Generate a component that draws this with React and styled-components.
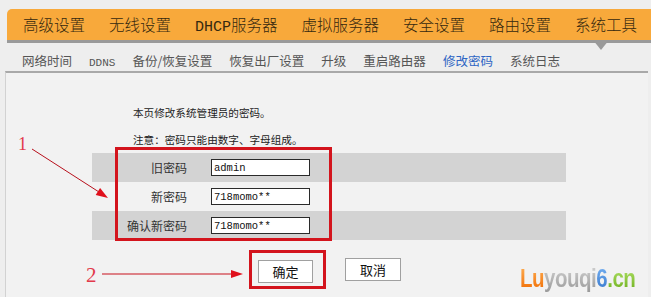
import React from 'react';
import styled, { createGlobalStyle } from 'styled-components';

const GlobalStyle = createGlobalStyle`
  html, body {
    margin: 0;
    padding: 0;
    background: #eeeeee;
  }
  body {
    font-family: "Noto Sans CJK SC", "Liberation Sans", sans-serif;
  }
`;

const Page = styled.div`
  position: relative;
  width: 651px;
  height: 297px;
  overflow: hidden;
  background: #eeeeee;
  padding-top: 9px;
  box-sizing: border-box;
`;

const MainNav = styled.ul`
  list-style: none;
  margin: 0 0 0 7px;
  padding: 0 0 0 16px;
  height: 31px;
  display: flex;
  align-items: center;
  gap: 24px;
  background: #f8a93b;
  border-radius: 5px 0 0 0;
  border-bottom: 3px solid #9a9a9a;
`;

const MainItem = styled.li`
  position: relative;
  height: 31px;
  line-height: 31px;
  font-size: 15.5px;
  font-weight: 300;
  color: #35280f;
  white-space: nowrap;

  ${(p) =>
    p.$active &&
    `
    &::after {
      content: "";
      position: absolute;
      left: 18px;
      top: 100%;
      width: 0;
      height: 0;
      border-left: 8px solid transparent;
      border-right: 8px solid transparent;
      border-top: 10px solid #9a9a9a;
      z-index: 2;
    }
  `}
`;

const Latin = styled.span`
  font-family: "Liberation Mono", monospace;
  font-weight: 400;
  font-size: ${(p) => p.$size || 15}px;
`;

const SubNav = styled.ul`
  list-style: none;
  margin: 0;
  padding: 11px 0 0 22px;
  height: 17px;
  display: flex;
  gap: 17px;
`;

const SubItem = styled.li`
  font-size: 12.5px;
  line-height: 14px;
  color: ${(p) => (p.$active ? '#2f66c4' : '#555555')};
  white-space: nowrap;
`;

const Panel = styled.div`
  position: relative;
  height: 226px;
  box-sizing: border-box;
  margin: 0 3px 0 5px;
  padding-top: 26px;
  border-top: 2px solid #a9a9a9;
  border-left: 1px solid #d2d2d2;
  background: #f2f2f2;
`;

const Note = styled.p`
  margin: 0;
  padding-left: 127px;
  font-size: 10.6px;
  line-height: 27px;
  color: #222222;
`;

const FormTable = styled.div`
  position: relative;
  width: 474px;
  margin-left: 86px;
`;

const Row = styled.div`
  display: grid;
  grid-template-columns: 95px 1fr;
  align-items: center;
  height: 29px;
  background: ${(p) => (p.$shade ? '#d3d3d3' : 'transparent')};
`;

const Label = styled.span`
  text-align: right;
  font-size: 12px;
  color: #333333;
`;

const Field = styled.input`
  margin-left: 24px;
  width: 99px;
  height: 17px;
  box-sizing: border-box;
  padding: 0 2px;
  border: 1px solid #2a2a2a;
  background: #ffffff;
  font-family: "Liberation Mono", monospace;
  font-size: 10.5px;
  color: #111111;
  outline: none;
`;

const Highlight = styled.div`
  position: absolute;
  left: ${(p) => p.$left}px;
  top: ${(p) => p.$top}px;
  width: ${(p) => p.$w}px;
  height: ${(p) => p.$h}px;
  box-sizing: border-box;
  border: 3px solid #d3141d;
  pointer-events: none;
`;

const Buttons = styled.div`
  display: flex;
  gap: 32px;
  margin: 18px 0 0 252px;
`;

const ButtonWrap = styled.div`
  position: relative;
`;

const Button = styled.button`
  width: ${(p) => p.$w || 55}px;
  height: 23px;
  padding: 0;
  border: 1px solid #a0a0a0;
  background: #ffffff;
  font-family: "Noto Sans CJK SC", sans-serif;
  font-size: 13px;
  color: #111111;
`;

const Overlay = styled.svg`
  position: absolute;
  left: 0;
  top: 0;
  pointer-events: none;
`;

const Num = styled.span`
  position: absolute;
  left: ${(p) => p.$x}px;
  top: ${(p) => p.$y}px;
  font-family: "Liberation Serif", serif;
  font-size: ${(p) => p.$size}px;
  line-height: 1;
  color: #e2394b;
`;

const Logo = styled.div`
  position: absolute;
  left: 520px;
  top: 266px;
  font-family: "Liberation Sans", sans-serif;
  font-weight: 900;
  font-size: 25px;
  line-height: 25px;
  letter-spacing: -0.6px;
  transform: scaleX(0.82);
  transform-origin: left top;
  white-space: nowrap;
`;

const LogoPart = styled.span`
  background: linear-gradient(to bottom, ${(p) => p.$from}, ${(p) => p.$to});
  -webkit-background-clip: text;
  background-clip: text;
  color: transparent;
`;

const mainMenu = [
  { label: '高级设置' },
  { label: '无线设置' },
  { label: 'DHCP服务器', latin: 'DHCP', rest: '服务器' },
  { label: '虚拟服务器' },
  { label: '安全设置' },
  { label: '路由设置' },
  { label: '系统工具', active: true },
];

const subMenu = ['网络时间', 'DDNS', '备份/恢复设置', '恢复出厂设置', '升级', '重启路由器', '修改密码', '系统日志'];

const fields = [
  { label: '旧密码', value: 'admin', shade: true },
  { label: '新密码', value: '718momo**' },
  { label: '确认新密码', value: '718momo**', shade: true },
];

export default function App() {
  return (
    <Page>
      <GlobalStyle />
      <MainNav>
        {mainMenu.map((m) => (
          <MainItem key={m.label} $active={m.active}>
            {m.latin ? (
              <>
                <Latin>{m.latin}</Latin>
                {m.rest}
              </>
            ) : (
              m.label
            )}
          </MainItem>
        ))}
      </MainNav>

      <SubNav>
        {subMenu.map((s) => (
          <SubItem key={s} $active={s === '修改密码'}>
            {s === 'DDNS' ? <Latin $size={11}>{s}</Latin> : s}
          </SubItem>
        ))}
      </SubNav>

      <Panel>
        <Note>本页修改系统管理员的密码。</Note>
        <Note>注意：密码只能由数字、字母组成。</Note>

        <FormTable>
          {fields.map((f) => (
            <Row key={f.label} $shade={f.shade}>
              <Label>{f.label}</Label>
              <Field type="text" defaultValue={f.value} />
            </Row>
          ))}
          <Highlight $left={23} $top={-6} $w={217} $h={94} />
        </FormTable>

        <Buttons>
          <ButtonWrap>
            <Button>确定</Button>
            <Highlight $left={-9} $top={-8} $w={77} $h={39} />
          </ButtonWrap>
          <Button $w={56}>取消</Button>
        </Buttons>
      </Panel>

      <Overlay width="651" height="297" viewBox="0 0 651 297">
        <line x1="32" y1="149" x2="99" y2="192" stroke="#b8101c" strokeWidth="1" />
        <polygon points="108,198 95.7,194.9 100.1,188.1" fill="#e0101c" />
        <line x1="102" y1="274" x2="232" y2="274" stroke="#c8101c" strokeWidth="1.2" />
        <polygon points="243,274 231,270 231,278" fill="#e0101c" />
      </Overlay>
      <Num $x={18} $y={135} $size={18}>1</Num>
      <Num $x={86} $y={265} $size={21}>2</Num>

      <Logo>
        <LogoPart $from="#ffb45a" $to="#f06a00">Lu</LogoPart>
        <LogoPart $from="#d4d4d4" $to="#9a9a9a">youqi</LogoPart>
        <LogoPart $from="#7ab4f4" $to="#3476cc">6</LogoPart>
        <LogoPart $from="#b8e870" $to="#6cae1c">.cn</LogoPart>
      </Logo>
    </Page>
  );
}
